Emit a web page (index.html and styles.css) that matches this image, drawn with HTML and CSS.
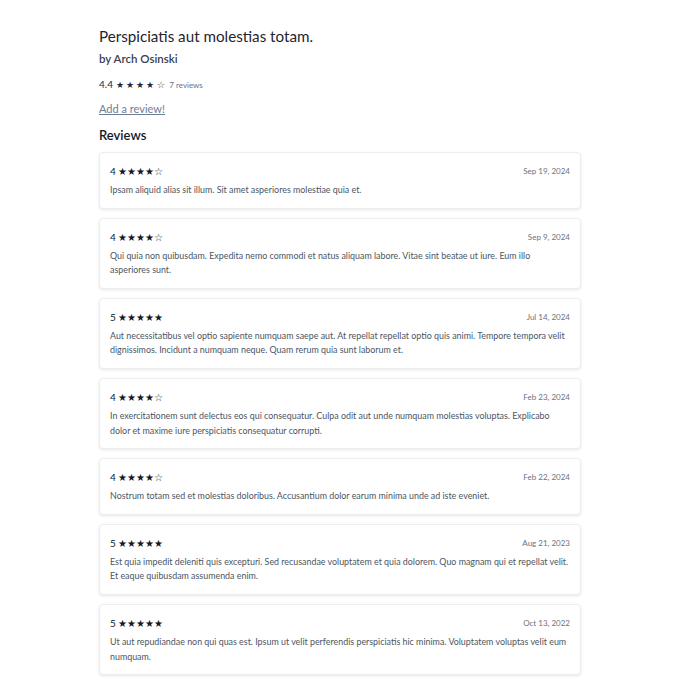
FILE: index.html
```html
<!DOCTYPE html>
<html>
<head>
<meta charset="utf-8">
<link rel="stylesheet" href="styles.css">
</head>
<body>
<main class="page">
  <h1 class="title">Perspiciatis aut molestias totam.</h1>
  <div class="author">by Arch Osinski</div>
  <div class="summary"><span class="avg">4.4</span> <span class="stars">★ ★ ★ ★ ☆</span> <span class="count">7 reviews</span></div>
  <a class="add" href="#">Add a review!</a>
  <h2 class="heading">Reviews</h2>
  <div class="list">
    <div class="card">
      <div class="head"><span class="rating">4 ★★★★☆</span><span class="date">Sep 19, 2024</span></div>
      <p class="body">Ipsam aliquid alias sit illum. Sit amet asperiores molestiae quia et.</p>
    </div>
    <div class="card">
      <div class="head"><span class="rating">4 ★★★★☆</span><span class="date">Sep 9, 2024</span></div>
      <p class="body">Qui quia non quibusdam. Expedita nemo commodi et natus aliquam labore. Vitae sint beatae ut iure. Eum illo asperiores sunt.</p>
    </div>
    <div class="card">
      <div class="head"><span class="rating">5 ★★★★★</span><span class="date">Jul 14, 2024</span></div>
      <p class="body">Aut necessitatibus vel optio sapiente numquam saepe aut. At repellat repellat optio quis animi. Tempore tempora velit dignissimos. Incidunt a numquam neque. Quam rerum quia sunt laborum et.</p>
    </div>
    <div class="card">
      <div class="head"><span class="rating">4 ★★★★☆</span><span class="date">Feb 23, 2024</span></div>
      <p class="body">In exercitationem sunt delectus eos qui consequatur. Culpa odit aut unde numquam molestias voluptas. Explicabo dolor et maxime iure perspiciatis consequatur corrupti.</p>
    </div>
    <div class="card">
      <div class="head"><span class="rating">4 ★★★★☆</span><span class="date">Feb 22, 2024</span></div>
      <p class="body">Nostrum totam sed et molestias doloribus. Accusantium dolor earum minima unde ad iste eveniet.</p>
    </div>
    <div class="card">
      <div class="head"><span class="rating">5 ★★★★★</span><span class="date">Aug 21, 2023</span></div>
      <p class="body">Est quia impedit deleniti quis excepturi. Sed recusandae voluptatem et quia dolorem. Quo magnam qui et repellat velit. Et eaque quibusdam assumenda enim.</p>
    </div>
    <div class="card">
      <div class="head"><span class="rating">5 ★★★★★</span><span class="date">Oct 13, 2022</span></div>
      <p class="body">Ut aut repudiandae non qui quas est. Ipsum ut velit perferendis perspiciatis hic minima. Voluptatem voluptas velit eum numquam.</p>
    </div>
  </div>
</main>
</body>
</html>
```
FILE: styles.css
```css
* { box-sizing: border-box; }
html, body { margin: 0; padding: 0; background: #fff; }
body {
  font-family: Lato, "Noto Sans", sans-serif;
  color: #1f2937;
}
.page {
  width: 482px;
  margin: 0 0 0 99px;
  padding-top: 26px;
  padding-bottom: 20px;
}
.title {
  font-size: 15.2px;
  font-weight: 400;
  line-height: 20px;
  margin: 0;
  color: #1f2430;
}
.author {
  font-size: 11.5px;
  font-weight: 600;
  line-height: 16px;
  margin-top: 5px;
  color: #3a4150;
}
.summary {
  margin-top: 10px;
  font-size: 10px;
  line-height: 14px;
  color: #1f2937;
}
.summary .stars { font-size: 9px; color: #1f2937; }
.summary .count { font-size: 8px; color: #6b7280; margin-left: 2px; }
.add {
  display: inline-block;
  margin-top: 10px;
  font-size: 11px;
  line-height: 14px;
  color: #6f7c96;
  text-decoration: underline;
}
.heading {
  font-size: 13px;
  font-weight: 600;
  line-height: 18px;
  margin: 10px 0 8px;
  color: #111827;
}
.list {
  display: flex;
  flex-direction: column;
  gap: 9px;
}
.card {
  border: 1px solid #eeeeee;
  border-radius: 4px;
  box-shadow: 0 1px 3px rgba(0,0,0,0.10);
  padding: 10px 10px 10px 10px;
  background: #fff;
}
.head {
  display: flex;
  justify-content: space-between;
  align-items: center;
  line-height: 16px;
}
.rating { font-size: 10px; color: #111827; }
.date { font-size: 8px; color: #6b7280; }
.body {
  margin: 4px 0 0;
  font-size: 8.9px;
  line-height: 14.6px;
  color: #4b5563;
}
```
